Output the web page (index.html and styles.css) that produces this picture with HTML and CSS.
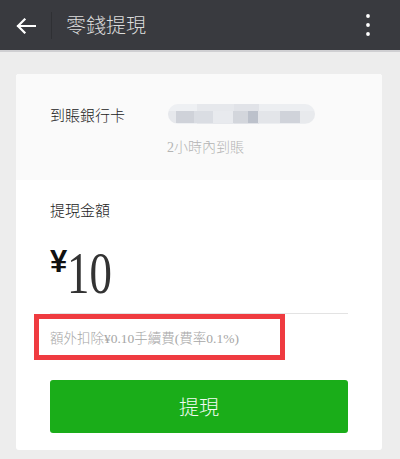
FILE: index.html
```html
<!DOCTYPE html>
<html lang="zh-Hant">
<head>
<meta charset="utf-8">
<title>零錢提現</title>
<link rel="stylesheet" href="styles.css">
</head>
<body>
<header class="topbar">
  <div class="back">
    <svg width="20" height="16" viewBox="0 0 20 16" aria-hidden="true">
      <path d="M19 8H2M8.5 1.5L2 8l6.5 6.5" fill="none" stroke="#fff" stroke-width="2.2" stroke-linecap="square"/>
    </svg>
  </div>
  <div class="sep"></div>
  <div class="title">零錢提現</div>
  <div class="more">
    <svg width="6" height="24" viewBox="0 0 6 24" aria-hidden="true">
      <circle cx="3" cy="3" r="1.9" fill="#fff"/>
      <circle cx="3" cy="12" r="1.9" fill="#fff"/>
      <circle cx="3" cy="21" r="1.9" fill="#fff"/>
    </svg>
  </div>
</header>
<main class="page">
  <section class="card">
    <div class="bank">
      <div class="bank-label">到賬銀行卡</div>
      <div class="bank-blur"></div>
      <div></div>
      <div class="bank-sub">2小時內到賬</div>
    </div>
    <div class="form">
      <div class="form-label">提現金額</div>
      <div class="amount">
        <span class="yen">¥</span>
        <span class="num">10</span>
      </div>
      <div class="fee">
        <span class="fee-text">額外扣除¥0.10手續費(費率0.1%)</span>
        <span class="mark"></span>
      </div>
      <button class="submit">提現</button>
    </div>
  </section>
</main>
</body>
</html>
```
FILE: styles.css
```css
* { box-sizing: border-box; }
html, body {
  margin: 0;
  padding: 0;
}
body {
  width: 400px;
  height: 459px;
  background: #ededed;
  font-family: "Noto Sans CJK TC", "Noto Sans", sans-serif;
  font-weight: 300;
  overflow: hidden;
}

.topbar {
  height: 52px;
  background: #393a3f;
  border-bottom: 2px solid #cfcfd2;
  display: flex;
  align-items: center;
}
.back {
  width: 51px;
  height: 50px;
  display: flex;
  align-items: center;
  justify-content: flex-start;
  padding-left: 16px;
  padding-top: 1px;
}
.sep {
  width: 1px;
  height: 27px;
  background: #2f3034;
}
.title {
  margin-left: 14px;
  color: #dcdcdc;
  font-size: 20px;
  line-height: 50px;
  flex: 1;
}
.more {
  width: 35px;
  height: 50px;
  display: flex;
  align-items: center;
  justify-content: flex-start;
}

.page {
  padding: 22px 18px 0 16px;
}
.card {
  background: #fff;
  border-radius: 3px;
  overflow: hidden;
}

.bank {
  background: #fafafa;
  height: 106px;
  padding: 31px 34px 22px 34px;
  display: grid;
  grid-template-columns: 118px 147px;
  grid-template-rows: 20px 20px;
  row-gap: 13px;
  align-items: center;
}
.bank-label {
  font-size: 15px;
  line-height: 20px;
  color: #222;
}
.bank-blur {
  width: 147px;
  height: 20px;
  border-radius: 10px;
  margin-top: -3px;
  background:
    linear-gradient(to right,
      #e6e8ec 0 5.7%, #cfd2d9 5.7% 18%, #dadde3 18% 30.7%, #e8eaee 30.7% 44%,
      #d3d6dc 44% 54.5%, #bcc1cb 54.5% 61.4%, #e3e5e9 61.4% 76%, #d0d3da 76% 90%, #e8eaed 90% 100%)
      0 100% / 100% 62% no-repeat,
    linear-gradient(to right,
      #eef0f3 0 20%, #e6e8ec 20% 45%, #e1e3e8 45% 62%, #eceef1 62% 100%);
}
.bank-sub {
  font-family: "Liberation Serif", "Noto Sans CJK TC", serif;
  font-weight: 300;
  font-size: 14px;
  line-height: 20px;
  color: #b4b4b4;
  margin-left: -1px;
}

.form {
  padding: 20px 34px 17px 34px;
}
.form-label {
  font-size: 15px;
  line-height: 20px;
  color: #222;
}
.amount {
  display: flex;
  align-items: flex-start;
  padding-top: 24px;
  height: 94px;
  border-bottom: 1px solid #e3e3e3;
}
.yen {
  font-family: "Liberation Sans", sans-serif;
  font-weight: bold;
  font-size: 31px;
  line-height: 31px;
  margin-top: 2px;
  color: #111;
  width: 17px;
}
.num {
  font-family: "Liberation Serif", serif;
  font-weight: normal;
  font-size: 59px;
  line-height: 59px;
  color: #333;
  display: inline-block;
  transform: scaleX(0.76);
  transform-origin: left center;
}
.fee {
  position: relative;
  height: 46px;
  padding-top: 15px;
}
.fee-text {
  display: block;
  font-family: "Liberation Serif", "Noto Sans CJK TC", serif;
  font-weight: 300;
  font-size: 13.5px;
  line-height: 20px;
  color: #a6a6a6;
  white-space: nowrap;
}
.mark {
  position: absolute;
  left: -16px;
  top: 0;
  width: 251px;
  height: 46px;
  border: 5px solid #ef3b40;
}
.submit {
  display: block;
  width: 100%;
  height: 53px;
  margin-top: 20px;
  border: 0;
  border-radius: 3px;
  background: #1aad19;
  color: #f2fbf2;
  font-family: "Noto Sans CJK TC", "Noto Sans", sans-serif;
  font-weight: 300;
  font-size: 20px;
  line-height: 53px;
  padding: 0;
}
```
